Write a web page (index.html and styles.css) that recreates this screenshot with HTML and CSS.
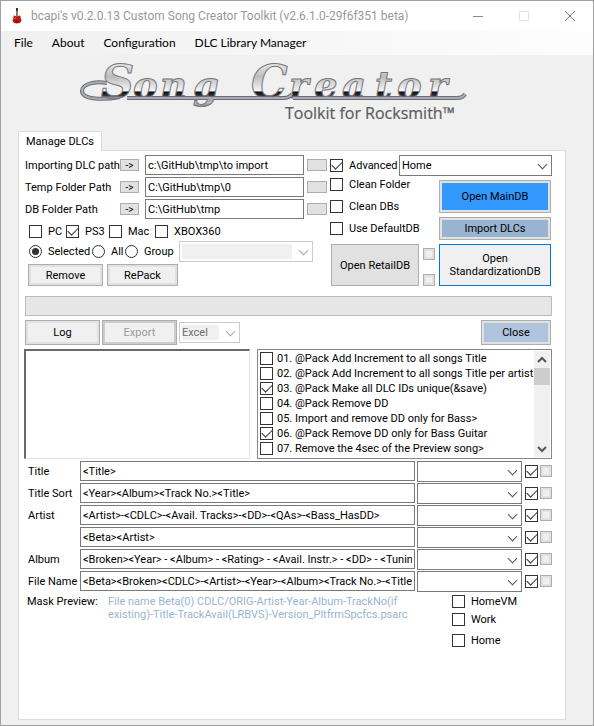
FILE: index.html
```html
<!DOCTYPE html>
<html lang="en">
<head>
<meta charset="utf-8">
<title>Custom Song Creator Toolkit</title>
<link rel="stylesheet" href="styles.css">
</head>
<body>
<div class="window">
  <header class="titlebar">
    <svg class="app-icon" width="12" height="18" viewBox="0 0 12 18" aria-hidden="true">
      <path d="M6 1.500V10" stroke="#8d7a70" stroke-width="2"/>
      <path d="M5 1h2v3H5z" fill="#3c3330"/>
      <path d="M3 8.500C4 8 4.500 9.500 6 9.500S8 8 9 8.500c1 1 .2 2 .8 3 1.500 2 .2 5-3.800 5S.700 13.500 2.200 11.500c.6-1-.2-2 .8-3z" fill="#b5190f"/>
      <path d="M2.500 12.500c.5-1 2-1.500 3-1.500" stroke="#f0664e" fill="none"/>
      <path d="M4.500 14.500h3" stroke="#501008"/>
    </svg>
    <h1 class="caption">bcapi's v0.2.0.13 Custom Song Creator Toolkit (v2.6.1.0-29f6f351 beta)</h1>
    <div class="window-buttons">
      <button type="button" aria-label="Minimize"><svg width="12" height="12" viewBox="0 0 12 12"><path d="M1 6.500h10" stroke="#8a8a8a"/></svg></button>
      <button type="button" aria-label="Maximize" disabled><svg width="12" height="12" viewBox="0 0 12 12"><path d="M1.500 1.500h9v9h-9z" fill="none" stroke="#e2e2e2"/></svg></button>
      <button type="button" aria-label="Close window"><svg width="12" height="12" viewBox="0 0 12 12"><path d="M1 1l10 10M11 1L1 11" stroke="#777"/></svg></button>
    </div>
  </header>
  <nav class="menu">
    <a href="#">File</a><a href="#">About</a><a href="#">Configuration</a><a href="#">DLC Library Manager</a>
  </nav>

  <div class="brand">
    <svg class="logo" width="400" height="76" viewBox="0 0 400 76" role="img" aria-label="Song Creator Toolkit for Rocksmith">
      <defs>
        <linearGradient id="chrome" gradientUnits="userSpaceOnUse" x1="0" y1="6" x2="0" y2="58">
          <stop offset="0" stop-color="#f2f2f2"/>
          <stop offset=".3" stop-color="#bcbcbc"/>
          <stop offset=".57" stop-color="#f4f4f4"/>
          <stop offset=".6" stop-color="#101012"/>
          <stop offset=".66" stop-color="#303035"/>
          <stop offset=".7" stop-color="#9092a0"/>
          <stop offset=".8" stop-color="#b8bac4"/>
          <stop offset="1" stop-color="#404045"/>
        </linearGradient>
      </defs>
      <path d="M30 28C14 25 5 31 5 36c0 9 22 9 38 6" class="swash-edge"/>
      <path d="M30 28C14 25 5 31 5 36c0 9 22 9 38 6" class="swash"/>
      <path d="M50 43H207q5 0 8-4M216 43H380q6 0 8-4" class="swash-edge"/>
      <g class="chrome">
        <text x="24" y="43" class="cap">S</text>
        <text x="56" y="43" class="low">o</text>
        <text x="83" y="43" class="low">n</text>
        <text x="116" y="43" class="low">g</text>
        <text x="174" y="43" class="cap">C</text>
        <text x="212" y="43" class="low">r</text>
        <text x="237" y="43" class="low">e</text>
        <text x="265" y="43" class="low">a</text>
        <text x="298" y="43" class="low">t</text>
        <text x="320" y="43" class="low">o</text>
        <text x="351" y="43" class="low">r</text>
      </g>
      <path d="M50 43H207q5 0 8-4M216 43H380q6 0 8-4" class="swash"/>
      <text x="208" y="64" class="tagline">Toolkit for Rocksmith™</text>
    </svg>
  </div>

  <div class="tabs"><button type="button" class="tab">Manage DLCs</button></div>

  <main class="panel">
    <section class="setup">
      <div class="setup-left">
        <div class="path"><label for="p1">Importing DLC path</label><button type="button" class="btn go">-&gt;</button><input id="p1" class="text" value="c:\GitHub\tmp\to import"><button type="button" class="btn mini" aria-label="Import option"></button></div>
        <div class="path"><label for="p2">Temp Folder Path</label><button type="button" class="btn go">-&gt;</button><input id="p2" class="text" value="C:\GitHub\tmp\0"><button type="button" class="btn mini" aria-label="Temp option"></button></div>
        <div class="path"><label for="p3">DB Folder Path</label><button type="button" class="btn go">-&gt;</button><input id="p3" class="text" value="C:\GitHub\tmp"><button type="button" class="btn mini" aria-label="DB option"></button></div>
        <div class="platforms">
          <label class="check"><input type="checkbox">PC</label>
          <label class="check"><input type="checkbox" checked>PS3</label>
          <label class="check"><input type="checkbox">Mac</label>
          <label class="check"><input type="checkbox">XBOX360</label>
        </div>
        <div class="scope">
          <label class="check"><input type="radio" name="scope" checked>Selected</label>
          <label class="check"><input type="radio" name="scope">All</label>
          <label class="check"><input type="radio" name="scope">Group</label>
          <div class="combo off group"><select disabled aria-label="Group"><option></option></select></div>
        </div>
        <div class="pack">
          <button type="button" class="btn framed remove">Remove</button>
          <button type="button" class="btn framed repack">RePack</button>
        </div>
      </div>
      <div class="setup-right">
        <div class="profile">
          <label class="check"><input type="checkbox" checked>Advanced</label>
          <div class="combo"><select aria-label="Profile"><option>Home</option></select></div>
        </div>
        <div class="actions">
          <div class="cleaning">
            <label class="check"><input type="checkbox">Clean Folder</label>
            <label class="check"><input type="checkbox">Clean DBs</label>
            <label class="check"><input type="checkbox">Use DefaultDB</label>
            <div class="retail">
              <button type="button" class="btn">Open RetailDB</button>
              <div class="retail-side"><button type="button" class="btn dot" aria-label="Retail option 1"></button><button type="button" class="btn dot" aria-label="Retail option 2"></button></div>
            </div>
          </div>
          <div class="databases">
            <button type="button" class="btn framed main-db">Open MainDB</button>
            <button type="button" class="btn framed import">Import DLCs</button>
            <button type="button" class="btn standard">Open StandardizationDB</button>
          </div>
        </div>
      </div>
    </section>

    <progress class="progress" value="0" max="100" aria-label="Progress"></progress>

    <section class="toolbar">
      <button type="button" class="btn framed log">Log</button>
      <button type="button" class="btn framed export" disabled>Export</button>
      <div class="combo off format"><select disabled aria-label="Export format"><option>Excel</option></select></div>
      <button type="button" class="btn framed close">Close</button>
    </section>

    <section class="lists">
      <textarea class="output" aria-label="Log output"></textarea>
      <div class="options">
        <div class="option-items">
          <label class="check"><input type="checkbox">01. @Pack Add Increment to all songs Title</label>
          <label class="check"><input type="checkbox">02. @Pack Add Increment to all songs Title per artist</label>
          <label class="check"><input type="checkbox" checked>03. @Pack Make all DLC IDs unique(&amp;save)</label>
          <label class="check"><input type="checkbox">04. @Pack Remove DD</label>
          <label class="check"><input type="checkbox">05. Import and remove DD only for Bass&gt;</label>
          <label class="check"><input type="checkbox" checked>06. @Pack Remove DD only for Bass Guitar</label>
          <label class="check"><input type="checkbox">07. Remove the 4sec of the Preview song&gt;</label>
        </div>
        <div class="scroll" aria-hidden="true">
          <svg width="16" height="17" viewBox="0 0 16 17"><path d="M4 11l4-4 4 4" fill="none" stroke="#555" stroke-width="2"/></svg>
          <div class="thumb"></div>
          <svg width="16" height="17" viewBox="0 0 16 17"><path d="M4 7l4 4 4-4" fill="none" stroke="#555" stroke-width="2"/></svg>
        </div>
      </div>
    </section>

    <section class="masks">
      <div class="mask"><label for="m1">Title</label><input id="m1" class="text" value="&lt;Title&gt;"><div class="combo"><select aria-label="Title mask"><option></option></select></div><input type="checkbox" aria-label="Use title" checked><button type="button" class="btn dot" aria-label="Apply title"></button></div>
      <div class="mask"><label for="m2">Title Sort</label><input id="m2" class="text" value="&lt;Year&gt;&lt;Album&gt;&lt;Track No.&gt;&lt;Title&gt;"><div class="combo"><select aria-label="Title sort mask"><option></option></select></div><input type="checkbox" aria-label="Use title sort" checked><button type="button" class="btn dot" aria-label="Apply title sort"></button></div>
      <div class="mask"><label for="m3">Artist</label><input id="m3" class="text" value="&lt;Artist&gt;-&lt;CDLC&gt;-&lt;Avail. Tracks&gt;-&lt;DD&gt;-&lt;QAs&gt;-&lt;Bass_HasDD&gt;"><div class="combo"><select aria-label="Artist mask"><option></option></select></div><input type="checkbox" aria-label="Use artist" checked><button type="button" class="btn dot" aria-label="Apply artist"></button></div>
      <div class="mask"><span></span><input class="text" aria-label="Artist sort" value="&lt;Beta&gt;&lt;Artist&gt;"><div class="combo"><select aria-label="Artist sort mask"><option></option></select></div><input type="checkbox" aria-label="Use artist sort" checked><button type="button" class="btn dot" aria-label="Apply artist sort"></button></div>
      <div class="mask"><label for="m5">Album</label><input id="m5" class="text" value="&lt;Broken&gt;&lt;Year&gt; - &lt;Album&gt; - &lt;Rating&gt; - &lt;Avail. Instr.&gt; - &lt;DD&gt; - &lt;Tuning&gt;"><div class="combo"><select aria-label="Album mask"><option></option></select></div><input type="checkbox" aria-label="Use album" checked><button type="button" class="btn dot" aria-label="Apply album"></button></div>
      <div class="mask"><label for="m6">File Name</label><input id="m6" class="text" value="&lt;Beta&gt;&lt;Broken&gt;&lt;CDLC&gt;-&lt;Artist&gt;-&lt;Year&gt;-&lt;Album&gt;&lt;Track No.&gt;-&lt;Title&gt;"><div class="combo"><select aria-label="File name mask"><option></option></select></div><input type="checkbox" aria-label="Use file name" checked><button type="button" class="btn dot" aria-label="Apply file name"></button></div>
    </section>

    <section class="preview">
      <span class="preview-label">Mask Preview:</span>
      <p class="preview-text">File name Beta(0) CDLC/ORIG-Artist-Year-Album-TrackNo(if<br>existing)-Title-TrackAvail(LRBVS)-Version_PltfrmSpcfcs.psarc</p>
      <div class="places">
        <label class="check"><input type="checkbox">HomeVM</label>
        <label class="check"><input type="checkbox">Work</label>
        <label class="check"><input type="checkbox">Home</label>
      </div>
    </section>
  </main>
</div>
</body>
</html>
```
FILE: styles.css
```css
* { box-sizing: border-box; }

body {
  margin: 0;
  background: #f0f0f0;
  color: #000;
  font: 11px/13px Roboto, "Liberation Sans", sans-serif;
}

button, input, select, textarea { font: inherit; color: inherit; margin: 0; border-radius: 0; }

.window {
  display: flex;
  flex-direction: column;
  min-height: 100vh;
  border: 1px solid #a0a0a0;
}

/* Title bar and menu */
.titlebar { display: flex; align-items: center; height: 30px; padding: 0 0 0 10px; background: #fff; }
.app-icon { margin-right: 8px; }
.caption { margin: 0; font: 12px/16px Roboto, sans-serif; color: #999; white-space: nowrap; }
.window-buttons { display: flex; margin-left: auto; }
.window-buttons button { display: grid; place-items: center; width: 46px; height: 28px; padding: 0; border: 0; background: none; }

.menu {
  display: flex;
  gap: 19px;
  height: 24px;
  padding: 0 13px;
  background: linear-gradient(90deg, #f0f0f0, #fdfdfd);
}
.menu a { font: 12px/24px Lato, sans-serif; color: #000; text-decoration: none; white-space: nowrap; }

/* Logo */
.brand { height: 76px; padding-left: 76px; }
.logo { display: block; overflow: visible; }
.chrome text {
  fill: url(#chrome);
  stroke: #77777c;
  stroke-width: 1;
  font-family: "DejaVu Serif", serif;
  font-style: italic;
  font-weight: bold;
}
.chrome .cap { font-size: 46px; }
.chrome .low { font-size: 37px; }
.swash-edge { fill: none; stroke: #6c6d74; stroke-width: 4; }
.swash { fill: none; stroke: #a9abb4; stroke-width: 2; }
.tagline { font: 16px "Open Sans", sans-serif; fill: #5c5c5c; stroke: #5c5c5c; stroke-width: 0.2; }

/* Tab page */
.tabs { padding-left: 17px; }
.tab {
  position: relative;
  display: block;
  height: 20px;
  padding: 0 7px;
  margin-bottom: -1px;
  background: #fff;
  border: 1px solid #dcdcdc;
  border-bottom: 0;
}
.panel {
  flex: 1;
  margin: 0 27px 5px 17px;
  padding: 4px 13px 8px 5px;
  background: #fff;
  border: 1px solid #dcdcdc;
}

/* Controls */
.btn {
  display: grid;
  place-content: center;
  padding: 0;
  background: #e1e1e1;
  border: 1px solid #adadad;
  line-height: 13px;
}
.framed { box-shadow: inset 0 0 0 2px #e1e1e1; background: #f0f0f0; }
.dot { width: 12px; height: 12px; background: #f0f0f0; box-shadow: inset 0 0 0 2px #e1e1e1; }
.text { width: 100%; min-width: 0; height: 20px; padding: 0 2px; border: 1px solid #7a7a7a; background: #fff; }

.combo { position: relative; }
.combo select {
  display: block;
  width: 100%;
  height: 21px;
  padding: 0 2px;
  border: 1px solid #7a7a7a;
  background: #fff;
  appearance: none;
}
.combo::after {
  content: "";
  position: absolute;
  right: 6px;
  top: 6px;
  width: 6px;
  height: 6px;
  border: solid #555;
  border-width: 0 1px 1px 0;
  transform: rotate(45deg);
  pointer-events: none;
}
.off select { border-color: #ccc; color: #6d6d6d; opacity: 1; background: #f0f0f0; box-shadow: inset 0 0 0 2px #fff, inset -20px 0 0 #fff; }
.off::after { border-color: #aaa; }

input[type="checkbox"], input[type="radio"] {
  flex: none;
  display: grid;
  place-items: center;
  width: 13px;
  height: 13px;
  border: 1px solid #333;
  background: #fff;
  appearance: none;
}
input[type="radio"] { border-radius: 50%; }
input[type="checkbox"]:checked::before {
  content: "";
  width: 9px;
  height: 5px;
  margin-top: -3px;
  border: solid #333;
  border-width: 0 0 1px 1px;
  transform: rotate(-45deg);
}
input[type="radio"]:checked::before { content: ""; width: 7px; height: 7px; border-radius: 50%; background: #333; }
.check { display: flex; align-items: center; gap: 6px; height: 13px; white-space: nowrap; }

/* Upper area */
.setup { display: grid; grid-template-columns: 303fr 222fr; gap: 3px; height: 131px; }
.setup-left { min-width: 0; }
.path { display: grid; grid-template-columns: 96px 19px 1fr 20px; align-items: center; margin-bottom: 2px; }
.path label { padding-left: 1px; white-space: nowrap; }
.path .text { margin: 0 3px 0 6px; width: auto; }
.go, .mini { height: 12px; }
.go { font-size: 10px; }
.platforms { display: grid; grid-template-columns: 37px 43px 46px 1fr; padding: 4px 0 3px 5px; }
.scope { display: grid; grid-template-columns: 63px 33px 54px 134px; align-items: center; padding-left: 5px; }
.pack { display: flex; gap: 4px; padding: 2px 0 0 4px; }
.pack .btn { height: 22px; }
.remove { width: 75px; }
.repack { width: 71px; }

.profile { display: grid; grid-template-columns: 69px 1fr; align-items: center; margin-bottom: 2px; }
.actions { display: grid; grid-template-columns: 1fr 112px; gap: 4px; padding-right: 1px; }
.cleaning { display: grid; gap: 9px; align-content: start; }
.retail { display: flex; justify-content: space-between; height: 42px; padding-left: 1px; }
.retail .btn:first-child { flex: 0 0 88px; }
.retail-side { display: flex; flex-direction: column; justify-content: space-between; padding-top: 4px; }
.retail-side .btn:first-child { flex: none; }
.databases { display: grid; gap: 4px; grid-template-rows: 33px 23px 42px; padding-top: 2px; }
.main-db { background: #3399ff; }
.import { background: #99b4d1; }
.standard { background: #f0f0f0; border-color: #0078d7; }

.progress { display: block; width: calc(100% - 1px); height: 20px; margin: 10px 0 3px 1px; border: 1px solid #bcbcbc; background: #e6e6e6; appearance: none; }
.progress::-webkit-progress-bar { background: #e6e6e6; }

.toolbar { display: flex; align-items: center; gap: 2px; padding: 1px 1px 4px; }
.toolbar .btn { height: 25px; }
.log { width: 75px; }
.export { width: 75px; color: #999; box-shadow: inset 0 0 0 2px #ccc; }
.format { width: 61px; }
.close { width: 70px; margin-left: auto; background: #b0c4de; }

/* Log and options */
.lists { display: grid; grid-template-columns: 226fr 295fr; gap: 7px; margin-bottom: 2px; }
.output { display: block; width: 100%; height: 110px; border: 1px solid #e3e3e3; border-top: 2px solid #696969; border-left: 2px solid #696969; background: #fff; resize: none; }
.options { display: flex; height: 110px; border: 1px solid #828790; padding: 1px; overflow: hidden; }
.option-items { flex: 1; min-width: 0; padding-left: 1px; }
.option-items .check { height: 15px; gap: 4px; }
.scroll { display: flex; flex-direction: column; width: 16px; background: #f0f0f0; }
.thumb { height: 17px; background: #cdcdcd; margin-bottom: auto; }

/* Masks */
.mask { display: grid; grid-template-columns: 56px 1fr 107px 16px 14px; align-items: start; height: 22px; }
.mask label { padding: 4px 0 0 4px; white-space: nowrap; }
.mask .combo { margin-left: 2px; }
.mask input[type="checkbox"], .mask .dot { margin-top: 4px; }
.mask input[type="checkbox"] { margin-left: 3px; }
.mask .dot { margin-left: 2px; }

.preview { display: grid; grid-template-columns: 81px 1fr 100px; padding: 2px 0 0 3px; }
.preview-text { margin: 0; color: #99b4d1; white-space: nowrap; }
.places { display: grid; gap: 5px; align-content: start; }
.places .check:last-child { margin-top: 3px; }
```
